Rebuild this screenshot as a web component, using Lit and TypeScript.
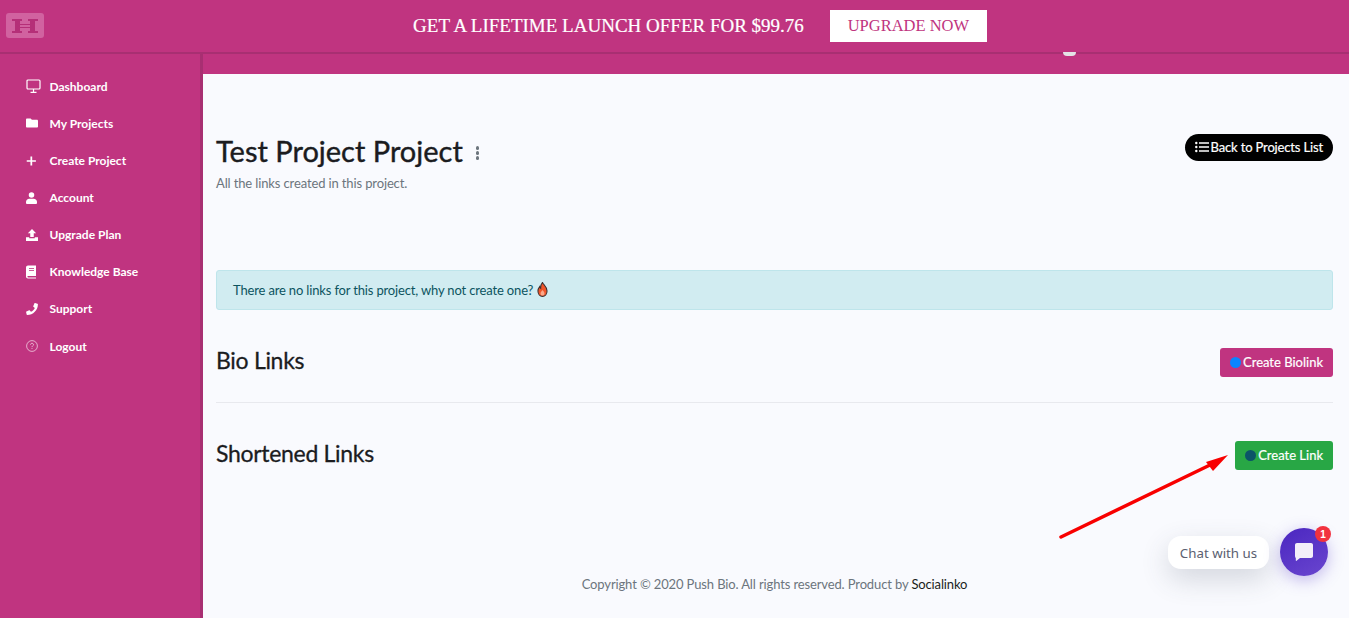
import { LitElement, html, css, svg } from "lit"
import { customElement } from "lit/decorators.js"

const navItems = [
  { label: "Dashboard", icon: svg`<rect x="1" y="1" width="13" height="9" rx="1" fill="none" stroke="currentColor" stroke-width="1.200"/><path d="M4.500 13.300h6M7.500 10v3" stroke="currentColor" stroke-width="1.200"/>`, vb: "0 0 15 14", w: 15 },
  { label: "My Projects", icon: svg`<path d="M1.200 1h3.800l1.400 1.500h5.400c.7 0 1.200.5 1.200 1.200v6.100c0 .7-.5 1.200-1.200 1.200H1.200C.5 11 0 10.500 0 9.800V2.200C0 1.500.5 1 1.200 1z" fill="currentColor"/>`, vb: "0 0 13 12", w: 12 },
  { label: "Create Project", icon: svg`<path d="M5.800 1v10M.8 6h10" stroke="currentColor" stroke-width="1.900"/>`, vb: "0 0 12 12", w: 11 },
  { label: "Account", icon: svg`<circle cx="6" cy="3.300" r="3" fill="currentColor"/><path d="M1 13c-.6 0-1-.4-1-1v-1.200C0 8.800 1.600 7.300 3.500 7.300h5c1.900 0 3.500 1.500 3.500 3.500V12c0 .6-.4 1-1 1z" fill="currentColor"/>`, vb: "0 0 12 13", w: 11 },
  { label: "Upgrade Plan", icon: svg`<path d="M6.500 0 11 4.700H8.400v4H4.600v-4H2z" fill="currentColor"/><path d="M0 9h3.500v1h6V9H13v4H0z" fill="currentColor"/>`, vb: "0 0 13 13", w: 12 },
  { label: "Knowledge Base", icon: svg`<path d="M2 0h8v10.500H2.200c-.5 0-.9.300-.9.800s.4.700.9.700H10v1H2c-1.100 0-2-.7-2-2V2c0-1.100.9-2 2-2z" fill="currentColor"/><path d="M3 3h5M3 5h5" stroke="#c03480" stroke-width=".8"/>`, vb: "0 0 10 13", w: 10 },
  { label: "Support", icon: svg`<path d="M12.700.700 10 .1c-.3-.1-.6.1-.7.400L8 3.500c-.1.300 0 .6.200.7l1.600 1.300C8.900 7.400 7.400 8.900 5.500 9.800L4.200 8.200c-.2-.2-.5-.3-.7-.2L.5 9.300c-.3.100-.5.400-.4.700l.6 2.700c.1.300.3.500.6.500C7.900 13.200 13.200 7.900 13.200 1.300c0-.3-.2-.5-.5-.6z" fill="currentColor"/>`, vb: "0 0 13.300 13.300", w: 12 },
  { label: "Logout", icon: svg`<circle cx="6" cy="6" r="5.400" fill="none" stroke="currentColor" stroke-width=".8" opacity=".75"/><path d="M4.500 4.700c0-.9.700-1.400 1.500-1.400s1.500.5 1.500 1.300c0 1.200-1.500 1.200-1.500 2.500M6 8.100v.9" fill="none" stroke="currentColor" stroke-width=".8" opacity=".75"/>`, vb: "0 0 12 12", w: 12 },
]

@customElement("app-root")
export class AppRoot extends LitElement {
  static styles = css`
    :host {
      display: block;
      position: relative;
      height: 618px;
      overflow: hidden;
      font-family: "Lato", "Liberation Sans", sans-serif;
      background: #f9fafe;
      color: #1b1e21;
    }

    .banner {
      height: 52px;
      display: flex;
      align-items: center;
      justify-content: center;
      gap: 26px;
      padding-left: 51px;
      background: #c03480;
      border-bottom: 2px solid #a82f72;
      position: relative;
      z-index: 1;
      font-family: "Liberation Serif", serif;
      color: #fff;
      font-size: 19px;
      -webkit-text-stroke: 0.2px #fff;
    }
    .logo {
      position: absolute;
      left: 6px;
      top: 13px;
      width: 38px;
      height: 25px;
      border-radius: 3px;
      background: #d162a0;
      color: #b52f78;
      display: flex;
      align-items: center;
      justify-content: center;
      -webkit-text-stroke: 0;
    }
    .upgrade {
      background: #fff;
      color: #c03480;
      font-size: 16.500px;
      width: 157px;
      height: 32px;
      display: flex;
      align-items: center;
      justify-content: center;
      -webkit-text-stroke: 0;
    }

    .body {
      display: flex;
      height: 564px;
    }
    .sidebar {
      width: 200px;
      flex: none;
      background: #c03480;
      border-right: 3px solid #a82f72;
      padding-top: 13.800px;
      box-sizing: content-box;
    }
    .nav-item {
      display: flex;
      align-items: center;
      height: 37.100px;
      padding-left: 25.500px;
      color: #fff;
      font-size: 12px;
      font-weight: 700;
    }
    .nav-icon {
      width: 24px;
      flex: none;
      display: flex;
      align-items: center;
    }

    .content {
      flex: 1;
      min-width: 0;
      display: flex;
      flex-direction: column;
    }
    .top-strip {
      height: 20px;
      background: #c03480;
      flex: none;
      position: relative;
    }
    .avatar-peek {
      position: absolute;
      z-index: 2;
      left: 860px;
      top: -2px;
      width: 13px;
      height: 4px;
      border-radius: 0 0 7px 7px;
      background: #e4e2e6;
    }
    .main {
      flex: 1;
      padding: 0 16px 0 13px;
      display: flex;
      flex-direction: column;
    }
    .head {
      display: flex;
      justify-content: space-between;
      align-items: flex-start;
      padding-top: 58px;
      height: 196px;
      box-sizing: border-box;
      flex: none;
    }
    .title-row {
      display: flex;
      align-items: center;
      gap: 13px;
    }
    h1 {
      margin: 0;
      font-size: 29px;
      line-height: 38px;
      font-weight: 400;
      color: #1b1c1f;
      -webkit-text-stroke: 0.4px #1b1c1f;
    }
    .sub {
      margin-top: 4px;
      font-size: 13px;
      line-height: 18px;
      letter-spacing: -0.130px;
      color: #6c757d;
    }
    .dots {
      display: flex;
      flex-direction: column;
      gap: 1.500px;
      margin-top: 4px;
    }
    .dots i {
      width: 3.500px;
      height: 3.500px;
      border-radius: 50%;
      background: #6c757d;
    }
    .back {
      margin-top: 2px;
      height: 27px;
      box-sizing: border-box;
      padding: 0 10px 1px 10px;
      display: flex;
      align-items: center;
      gap: 2px;
      background: #000;
      color: #fff;
      border-radius: 14px;
      font-size: 13px;
      letter-spacing: -0.150px;
      -webkit-text-stroke: 0.2px #fff;
    }
    .alert {
      height: 40px;
      box-sizing: border-box;
      display: flex;
      align-items: center;
      gap: 4px;
      padding-left: 16px;
      padding-bottom: 1px;
      background: #d1ecf1;
      border: 1px solid #bee5eb;
      border-radius: 3px;
      color: #0c5460;
      font-size: 13px;
      letter-spacing: -0.160px;
      flex: none;
    }
    .section {
      display: flex;
      justify-content: space-between;
      align-items: flex-start;
      flex: none;
    }
    .section.bio {
      margin-top: 38px;
      height: 54px;
      border-bottom: 1px solid #e8e9ee;
    }
    .section.short {
      margin-top: 38px;
      height: 30px;
    }
    h2 {
      margin: 0;
      font-size: 23px;
      font-weight: 400;
      line-height: 25px;
      letter-spacing: -0.300px;
      color: #1b1c1f;
      -webkit-text-stroke: 0.3px #1b1c1f;
    }
    .btn {
      height: 29px;
      box-sizing: border-box;
      padding: 0 10px 1px 10px;
      display: flex;
      align-items: center;
      gap: 2px;
      border-radius: 3px;
      color: #fff;
      font-size: 13px;
      -webkit-text-stroke: 0.2px #fff;
    }
    .btn.pink { background: #c03480; }
    .btn.green { background: #28a745; }
    .dot {
      width: 11px;
      height: 11px;
      border-radius: 50%;
    }
    .footer {
      margin-top: 103px;
      text-align: center;
      font-size: 13px;
      line-height: 20px;
      letter-spacing: -0.130px;
      color: #6c757d;
    }
    .footer span { color: #1b1e21; }

    .arrow {
      position: absolute;
      left: 1055px;
      top: 450px;
    }
    .chat-label {
      position: absolute;
      left: 1168px;
      top: 536px;
      width: 101px;
      height: 33px;
      border-radius: 13px;
      background: #fff;
      color: #5a6070;
      font-family: "Noto Sans", "Lato", sans-serif;
      font-size: 13.300px;
      display: flex;
      align-items: center;
      justify-content: center;
      box-shadow: 0 10px 28px rgba(60, 70, 90, 0.2);
    }
    .chat-button {
      position: absolute;
      left: 1280px;
      top: 528px;
      width: 48px;
      height: 48px;
      border-radius: 50%;
      background: linear-gradient(150deg, #4a26c0, #6a46cf);
      box-shadow: 0 4px 16px rgba(90, 60, 200, 0.35);
      display: flex;
      align-items: center;
      justify-content: center;
    }
    .badge {
      position: absolute;
      left: 1315px;
      top: 526px;
      width: 16px;
      height: 16px;
      border-radius: 50%;
      background: #f2323f;
      color: #fff;
      font-family: "Liberation Sans", sans-serif;
      font-size: 10px;
      font-weight: 700;
      display: flex;
      align-items: center;
      justify-content: center;
    }
  `

  render() {
    return html`
      <div class="banner">
        <div class="logo">
          <svg width="26" height="14" viewBox="0 0 26 14" fill="currentColor"><path d="M0 0h10v2H8v3h10V2h-2V0h10v2h-3v10h3v2H16v-2h2V9H8v3h2v2H0v-2h3V2H0z"/><path d="M8 6h10v2H8z" fill="#d162a0"/></svg>
        </div>
        <span>GET A LIFETIME LAUNCH OFFER FOR $99.76</span>
        <div class="upgrade">UPGRADE NOW</div>
      </div>
      <div class="body">
        <nav class="sidebar">
          ${navItems.map(item => html`
            <div class="nav-item">
              <span class="nav-icon"><svg width=${item.w} height="14" viewBox=${item.vb}>${item.icon}</svg></span>
              ${item.label}
            </div>
          `)}
        </nav>
        <div class="content">
          <div class="top-strip"><div class="avatar-peek"></div></div>
          <div class="main">
            <div class="head">
              <div>
                <div class="title-row">
                  <h1>Test Project Project</h1>
                  <div class="dots"><i></i><i></i><i></i></div>
                </div>
                <div class="sub">All the links created in this project.</div>
              </div>
              <div class="back">
                <svg width="14" height="12" viewBox="0 0 14 12" fill="#fff"><circle cx="1.300" cy="2" r="1.200"/><circle cx="1.300" cy="6" r="1.200"/><circle cx="1.300" cy="10" r="1.200"/><path d="M4 1.200h10v1.600H4zM4 5.200h10v1.600H4zM4 9.200h10v1.600H4z"/></svg>
                Back to Projects List
              </div>
            </div>
            <div class="alert">
              There are no links for this project, why not create one?
              <svg width="11" height="15" viewBox="0 0 14 17" preserveAspectRatio="none"><path d="M7 .5c.8 2.500 5.800 4.800 5.800 9.600 0 3.600-2.600 6.200-5.800 6.200S1.200 13.700 1.200 10.100c0-2.300 1.100-3.700 2.200-4.900.2 1 .6 1.600 1.300 2C4.500 4.700 5.300 2.300 7 .5z" fill="#f0562a" stroke="#3a3030" stroke-width="1.300"/><path d="M7 9c1.500 1.500 2.500 2.500 2.500 4S8.400 15.300 7 15.300 4.500 14.500 4.500 13 5.800 10.500 7 9z" fill="#fba98a"/></svg>
            </div>
            <div class="section bio">
              <h2>Bio Links</h2>
              <div class="btn pink"><span class="dot" style="background:#0a84ff"></span>Create Biolink</div>
            </div>
            <div class="section short">
              <h2>Shortened Links</h2>
              <div class="btn green"><span class="dot" style="background:#0b5468"></span>Create Link</div>
            </div>
            <div class="footer">Copyright © 2020 Push Bio. All rights reserved. Product by <span>Socialinko</span></div>
          </div>
        </div>
      </div>
      <svg class="arrow" width="180" height="95" viewBox="0 0 180 95">
        <path d="M6 87 155 15" stroke="#f80000" stroke-width="3.500" stroke-linecap="round"/>
        <path d="M173 5 151 12 158 21z" fill="#f80000"/>
      </svg>
      <div class="chat-label">Chat with us</div>
      <div class="chat-button">
        <svg width="18" height="18" viewBox="0 0 18 18"><path d="M2 0h14c1.100 0 2 .9 2 2v11c0 1.100-.9 2-2 2H5l-3.400 2.800c-.4.300-.8 0-.8-.4V15C.3 14.700 0 14 0 13V2C0 .9.900 0 2 0z" fill="#f3eef9"/></svg>
      </div>
      <div class="badge">1</div>
    `
  }
}
